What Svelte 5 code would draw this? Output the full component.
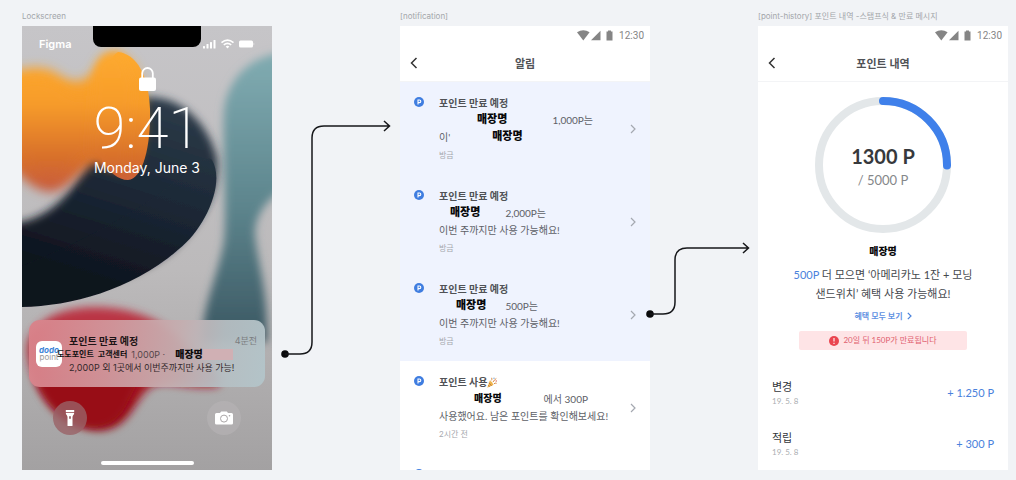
<script>
  const notices = [
    {
      title: '포인트 만료 예정', unread: true, time: '방금',
      store: 38, gap: 45, tail: '1,000P는', second: "이'", secondStore: 42
    },
    {
      title: '포인트 만료 예정', unread: true, time: '방금',
      store: 11, gap: 25, tail: '2,000P는', second: '이번 주까지만 사용 가능해요!'
    },
    {
      title: '포인트 만료 예정', unread: true, time: '방금',
      store: 17, gap: 19, tail: '500P는', second: '이번 주까지만 사용 가능해요!'
    },
    {
      title: '포인트 사용', party: true, unread: false, time: '2시간 전',
      store: 35, gap: 42, tail: '에서 300P', second: '사용했어요. 남은 포인트를 확인해보세요!', small: true
    },
    { title: '', unread: false, time: '', store: 0, gap: 0, tail: '', second: '' }
  ];

  const history = [
    { kind: '변경', date: '19. 5. 8', amount: '+ 1.250 P' },
    { kind: '적립', date: '19. 5. 8', amount: '+ 300 P' }
  ];
</script>

{#snippet appHeader(title)}
  <div class="status">
    <svg width="38" height="11" viewBox="0 0 38 11" fill="#858585" aria-hidden="true">
      <path d="M0 2.2Q6.300-1.800 12.600 2.200L6.300 10.500Z" />
      <path d="M23.500 .8V10.300H14Z" />
      <path d="M31 .4h3v1h1.500v9H29.500v-9H31Z" />
    </svg>
    <span>12:30</span>
  </div>
  <header class="appbar">
    <button class="back" aria-label="뒤로">
      <svg width="8" height="12" viewBox="0 0 8 12" aria-hidden="true">
        <path d="M6.500 1 1.500 6l5 5" fill="none" stroke="#333" stroke-width="1.500" />
      </svg>
    </button>
    <h3>{title}</h3>
  </header>
{/snippet}

<main>
  <section class="frame">
    <h2>Lockscreen</h2>
    <div class="screen lock">
      <svg class="wallpaper" viewBox="0 0 250 444" preserveAspectRatio="xMidYMid slice" aria-hidden="true">
        <defs>
          <linearGradient id="wall" x1="0" y1="0" x2="0" y2="1">
            <stop offset="0" stop-color="#c6c5c8" />
            <stop offset=".55" stop-color="#bcbabb" />
            <stop offset="1" stop-color="#a3a1a2" />
          </linearGradient>
          <linearGradient id="orange" gradientUnits="userSpaceOnUse" x1="0" y1="30" x2="0" y2="165">
            <stop offset="0" stop-color="#fda92f" />
            <stop offset=".35" stop-color="#f79c2a" />
            <stop offset=".75" stop-color="#d8702a" />
            <stop offset="1" stop-color="#c65a40" />
          </linearGradient>
          <linearGradient id="navy" gradientUnits="userSpaceOnUse" x1="140" y1="70" x2="80" y2="260">
            <stop offset="0" stop-color="#2c3b49" />
            <stop offset=".5" stop-color="#1c2836" />
            <stop offset="1" stop-color="#0e131d" />
          </linearGradient>
          <linearGradient id="teal" gradientUnits="userSpaceOnUse" x1="0" y1="40" x2="0" y2="320">
            <stop offset="0" stop-color="#7ea9af" />
            <stop offset=".5" stop-color="#5d858d" />
            <stop offset="1" stop-color="#3a5661" />
          </linearGradient>
          <linearGradient id="red" gradientUnits="userSpaceOnUse" x1="0" y1="280" x2="0" y2="405">
            <stop offset="0" stop-color="#bd3b4a" />
            <stop offset=".5" stop-color="#ad1c2a" />
            <stop offset="1" stop-color="#900813" />
          </linearGradient>
          <filter id="soft" x="-30%" y="-30%" width="160%" height="160%"><feGaussianBlur stdDeviation="5.500" /></filter>
          <filter id="edge" x="-30%" y="-30%" width="160%" height="160%"><feGaussianBlur stdDeviation="4" /></filter>
          <filter id="fine" x="-10%" y="-10%" width="120%" height="120%"><feGaussianBlur stdDeviation=".7" /></filter>
        </defs>
        <rect width="250" height="444" fill="url(#wall)" />
        <path d="M202 84C206 54 226 28 268 26V158C246 172 233 188 233 208C236 240 246 262 245 316H180C180 280 196 250 202 215C205 180 200 120 202 84Z" fill="url(#teal)" filter="url(#edge)" />
        <path d="M108 74C150 62 184 90 195 132C198 165 180 196 150 224C110 256 50 268-20 270V199C22 196 46 176 68 130Z" fill="url(#navy)" filter="url(#edge)" />
        <path d="M190 134C204 158 182 204 157 223C110 264 50 280 0 281V240C50 220 110 190 150 158C170 142 184 128 190 134Z" fill="url(#navy)" filter="url(#fine)" />
        <path d="M-20 52C-2 40 22 38 36 48C50 58 62 58 72 44C78 32 82 27 92 27C112 28 122 50 122 95C120 130 112 145 98 145C88 144 82 132 72 138C54 148 44 166 28 166C8 164-6 146-20 130Z" fill="url(#orange)" filter="url(#soft)" />
        <path d="M-10 60C10 50 30 54 44 66C60 76 72 68 82 56L106 140C90 136 74 122 60 130C46 140 40 154 28 154C14 152 2 130-10 112Z" fill="url(#orange)" filter="url(#edge)" />
        <path d="M96 26C115 28 127 50 128 83C129 120 121 153 106 154C96 154 88 146 80 136L84 60C84 44 88 30 96 26Z" fill="url(#orange)" filter="url(#fine)" />
        <path d="M72 50C76 32 84 26 97 27L112 60L104 140L84 142L66 128Z" fill="url(#orange)" filter="url(#edge)" />
        <path d="M6 330C0 302 32 280 75 281C110 282 140 292 165 320C180 338 206 345 196 360C165 364 145 352 130 360C112 372 108 405 76 404C42 402 10 365 6 330Z" fill="url(#red)" filter="url(#edge)" />
        <path d="M14 352C22 380 46 402 74 401C100 398 104 380 118 352Z" fill="#980a15" filter="url(#edge)" />
      </svg>

      <div class="notch"></div>
      <div class="phone-status">
        <span>Figma</span>
        <svg width="52" height="10" viewBox="0 0 52 10" fill="#fff" aria-hidden="true">
          <rect x="0" y="7" width="2" height="2.500" rx=".5" />
          <rect x="3.500" y="5" width="2" height="4.500" rx=".5" />
          <rect x="7" y="3" width="2" height="6.500" rx=".5" />
          <rect x="10.500" y="1" width="2" height="8.500" rx=".5" />
          <g fill="none" stroke="#fff" stroke-width="1.600">
            <path d="M18.500 3.700Q24.500-1.300 30.500 3.700" />
            <path d="M20.800 5.900Q24.500 2.900 28.200 5.900" />
          </g>
          <path d="M22.700 7.400Q24.500 6.200 26.300 7.400L24.500 9.500Z" />
          <rect x="36" y="1.500" width="14" height="7" rx="1.500" />
          <path d="M50.700 3.500q1.200 1.500 0 3Z" />
        </svg>
      </div>
      <svg class="padlock" width="17" height="24" viewBox="0 0 17 24" aria-hidden="true">
        <path d="M3.200 11V6.300a5.300 5.300 0 0 1 10.600 0V11" fill="none" stroke="#fff" stroke-width="1.800" />
        <rect y="10.500" width="17" height="13.500" rx="2" fill="#fff" />
      </svg>
      <p class="clock">9:41</p>
      <p class="date">Monday, June 3</p>

      <article class="push">
        <div class="applogo"><b>dodo</b><span>point</span></div>
        <div class="push-body">
          <div class="push-head">
            <h3>포인트 만료 예정</h3>
            <time>4분전</time>
          </div>
          <p class="sender">
            <b>도도포인트</b><b>고객센터</b><span>1,000P ·</span><strong>매장명</strong>
          </p>
          <p>2,000P 외 1곳에서 이번주까지만 사용 가능!</p>
        </div>
      </article>

      <div class="shortcuts">
        <button class="torch" aria-label="손전등">
          <svg width="10" height="18" viewBox="0 0 10 18" fill="#fff" aria-hidden="true">
            <path d="M.8 1h8.400v2.200H.8Z" />
            <path d="M.8 4h8.400c0 2-1.700 2.300-1.700 4v8.500q0 .5-.5.500H3q-.5 0-.5-.5V8C2.500 6.300.8 6 .8 4Z" />
            <rect x="4.300" y="7" width="1.400" height="3" rx=".7" fill="#7e3d43" />
          </svg>
        </button>
        <button aria-label="카메라">
          <svg width="18" height="14" viewBox="0 0 18 14" aria-hidden="true">
            <path d="M1.500 2H5L6.200.4h5.600L13 2h3.500Q18 2 18 3.500v8.700q0 1.400-1.500 1.400h-15Q0 13.600 0 12.200V3.500Q0 2 1.500 2Z" fill="#fff" />
            <circle cx="9" cy="7.600" r="3.500" fill="none" stroke="#aaa6a7" stroke-width="1" />
            <circle cx="14.500" cy="4.800" r=".8" fill="#aaa6a7" />
          </svg>
        </button>
      </div>
      <div class="home"></div>
    </div>
  </section>

  <svg class="link" viewBox="0 0 128 444" aria-hidden="true">
    <circle cx="13" cy="328" r="3.800" />
    <path d="M13 328H28Q40 328 40 316V112Q40 100 52 100H117M112 95l5.500 5-5.500 5" />
  </svg>

  <section class="frame">
    <h2>[notification]</h2>
    <div class="screen">
      {@render appHeader('알림')}
      <ul class="notices">
        {#each notices as n}
          <li>
            <a href="#notice" class:unread={n.unread}>
              <svg class="coin" width="10" height="10" viewBox="0 0 10 10" aria-hidden="true">
                <circle cx="5" cy="5" r="5" fill="#3f7de0" />
                <path d="M4 7.500V3h1.500a1.300 1.300 0 0 1 0 2.600H4" fill="none" stroke="#fff" stroke-width="1.100" />
              </svg>
              {#if n.title}
                <div class="notice-body">
                  <h4>
                    {n.title}{#if n.party}<svg width="10" height="11" viewBox="0 0 10 11" aria-hidden="true">
                      <path d="M.3 10.700 2.800 3.600Q5.800 5 6.400 8Z" fill="#efb54c" />
                      <path d="M1.200 8.200 2.600 9.800M2 5.800 4.600 8.900" stroke="#b9703a" stroke-width=".8" />
                      <path d="M4 3.500Q5.500 2.500 4.700.8M6 5Q7.500 2.500 9.300 1.500M6.800 7Q8 5.500 9.600 6.300" fill="none" stroke="#d98b45" stroke-width="1" />
                      <circle cx="7" cy="1.200" r=".7" fill="#6fa3d8" /><circle cx="9.200" cy="4" r=".7" fill="#d2584f" />
                    </svg>{/if}
                  </h4>
                  <p>
                    <strong class:small={n.small} style="margin-left: {n.store}px; margin-right: {n.gap}px">매장명</strong><span>{n.tail}</span>
                  </p>
                  <p>
                    <span>{n.second}</span>{#if n.secondStore}<strong style="margin-left: {n.secondStore}px">매장명</strong>{/if}
                  </p>
                  <time>{n.time}</time>
                </div>
                <svg class="chevron" width="6" height="10" viewBox="0 0 6 10" aria-hidden="true">
                  <path d="m1 1 4 4-4 4" fill="none" stroke="#a4a8b0" stroke-width="1.200" />
                </svg>
              {/if}
            </a>
          </li>
        {/each}
      </ul>
    </div>
  </section>

  <svg class="link" viewBox="0 0 108 444" aria-hidden="true">
    <circle cx="0" cy="288" r="3.800" />
    <path d="M0 288H13Q25 288 25 276V234Q25 222 37 222H98M93 217l5.500 5-5.500 5" />
  </svg>

  <section class="frame">
    <h2>[point-history] 포인트 내역 -스탬프식 &amp; 만료 메시지</h2>
    <div class="screen">
      {@render appHeader('포인트 내역')}
      <div class="points">
        <div class="ring">
          <svg viewBox="0 0 136 136" aria-hidden="true">
            <circle cx="68" cy="68" r="64" fill="none" stroke="#e3e7e9" stroke-width="8" />
            <path d="M68 4a64 64 0 0 1 64 64.500" fill="none" stroke="#3f80ea" stroke-width="8" stroke-linecap="round" />
          </svg>
          <div class="score"><strong>1300 P</strong><span>/ 5000 P</span></div>
        </div>
        <strong class="shop">매장명</strong>
        <p class="goal"><em>500P</em> 더 모으면 ‘아메리카노 1잔 + 모닝<br />샌드위치’ 혜택 사용 가능해요!</p>
        <a class="more" href="#benefits">
          혜택 모두 보기
          <svg width="5" height="8" viewBox="0 0 5 8" aria-hidden="true">
            <path d="m.8.8 3.200 3.200L.8 7.200" fill="none" stroke="#4a82dc" stroke-width="1.200" />
          </svg>
        </a>
        <p class="warning">
          <svg width="10" height="10" viewBox="0 0 10 10" aria-hidden="true">
            <circle cx="5" cy="5" r="5" fill="#ea4550" />
            <path d="M5 2v3.600M5 6.800V8" stroke="#fff" stroke-width="1.100" />
          </svg>
          20일 뒤 150P가 만료됩니다
        </p>
        <ul class="history">
          {#each history as h}
            <li>
              <div><span class="kind">{h.kind}</span><time>{h.date}</time></div>
              <span class="amount">{h.amount}</span>
            </li>
          {/each}
        </ul>
      </div>
    </div>
  </section>
</main>

<style>
  :global(body) {
    background: #f1f3f6;
  }
  h2, h3, h4, p, ul {
    margin: 0;
    padding: 0;
    list-style: none;
  }
  a {
    color: inherit;
    text-decoration: none;
  }
  button {
    border: 0;
    padding: 0;
    background: none;
    cursor: pointer;
  }
  svg {
    display: block;
    flex: none;
  }
  main {
    box-sizing: border-box;
    height: 100vh;
    padding: 0 8px 10px 22px;
    display: grid;
    grid-template-columns: 250fr 128fr 250fr 108fr 250fr;
    font-family: Lato, "Noto Sans CJK KR", sans-serif;
    color: #45484d;
  }
  .frame {
    display: flex;
    flex-direction: column;
    min-width: 0;
    min-height: 0;
  }
  h2 {
    height: 20px;
    padding-top: 6px;
    font: 400 8px/20px Inter, "Noto Sans CJK KR", sans-serif;
    color: #a3a6aa;
    white-space: nowrap;
  }
  .screen {
    flex: 1;
    min-height: 0;
    position: relative;
    display: flex;
    flex-direction: column;
    overflow: hidden;
    background: #fff;
  }
  .link {
    position: relative;
    width: 100%;
    margin-top: 26px;
    overflow: visible;
    fill: #0a0a0c;
  }
  .link path {
    fill: none;
    stroke: #16171a;
    stroke-width: 1.5;
  }

  /* lock screen */
  .lock {
    align-items: center;
    font-family: Inter, "Noto Sans CJK KR", sans-serif;
    color: #fff;
  }
  .lock > * {
    position: relative;
  }
  .lock > .wallpaper {
    position: absolute;
    inset: 0;
    width: 100%;
    height: 100%;
  }
  .lock > .notch {
    position: absolute;
    top: 0;
    left: 50%;
    width: 108px;
    height: 21px;
    margin-left: -54px;
    border-radius: 0 0 8px 8px;
    background: #000;
  }
  .phone-status {
    box-sizing: border-box;
    width: 100%;
    height: 36px;
    padding: 0 17px;
    display: flex;
    align-items: center;
    justify-content: space-between;
    font-size: 11px;
    font-weight: 600;
  }
  .padlock {
    margin-top: 5px;
  }
  .clock {
    margin-top: 7px;
    font-family: Roboto, Inter, sans-serif;
    font-size: 58px;
    font-weight: 200;
    line-height: 60px;
  }
  .date {
    font-size: 14px;
    line-height: 20px;
  }
  .push {
    box-sizing: border-box;
    align-self: stretch;
    height: 67px;
    margin: auto 7px 0;
    padding: 14px 8px 0 7px;
    display: flex;
    gap: 7px;
    border-radius: 11px;
    background: linear-gradient(100deg, #da8088f2, #d0989df2 35%, #c4aeb0f2 62%, #b6bec2f2 80%, #b3c5caf2);
    color: #33282b;
    font-size: 9px;
    line-height: 13px;
  }
  .applogo {
    width: 26px;
    height: 26px;
    margin-top: 7px;
    display: flex;
    flex-direction: column;
    align-items: center;
    justify-content: center;
    border-radius: 6px;
    background: #fff;
    font-size: 8px;
    line-height: 7px;
    color: #999;
  }
  .applogo b {
    font-style: italic;
    color: #3b84d8;
  }
  .push-body {
    flex: 1;
    white-space: nowrap;
  }
  .push-head {
    display: flex;
    justify-content: space-between;
    line-height: 14px;
  }
  .push-head h3 {
    font-size: 10px;
    font-weight: 700;
    color: #1d1416;
  }
  .push-head time {
    color: #7b7d80;
  }
  .push-body .sender {
    margin-left: -12px;
    display: flex;
    align-items: center;
    gap: 4px;
    color: #54464a;
  }
  .sender b {
    font-size: 8px;
    color: #111;
  }
  .sender strong {
    flex: 1;
    max-width: 58px;
    margin-left: 6px;
    font-size: 10px;
    font-weight: 900;
    line-height: 11px;
    color: #0c0a0b;
    background: linear-gradient(90deg, transparent 40%, #d0b0b4 50%);
  }
  .shortcuts {
    align-self: stretch;
    margin: 14px 31px 0;
    display: flex;
    justify-content: space-between;
  }
  .shortcuts button {
    width: 34px;
    height: 34px;
    display: grid;
    place-items: center;
    border-radius: 50%;
    background: #b8b4b699;
  }
  .shortcuts .torch {
    background: #9a6266cc;
  }
  .home {
    width: 93px;
    height: 4px;
    margin: 26px 0 5px;
    border-radius: 2px;
    background: #fff;
  }

  /* shared app chrome */
  .status {
    flex: none;
    height: 19px;
    padding-right: 6px;
    display: flex;
    align-items: center;
    justify-content: flex-end;
    gap: 4px;
    font: 10px Roboto, sans-serif;
    color: #858585;
  }
  .appbar {
    flex: none;
    height: 36px;
    padding: 0 10px;
    display: grid;
    grid-template-columns: 10px 1fr 10px;
    align-items: center;
    border-bottom: 1px solid #f3f4f6;
  }
  .appbar h3 {
    font-size: 11px;
    font-weight: 700;
    text-align: center;
    color: #505256;
  }

  /* notification list */
  .notices a {
    box-sizing: border-box;
    height: 93px;
    padding: 14px 14px 0 14px;
    display: flex;
    gap: 15px;
    font-size: 10px;
  }
  .notices .unread {
    background: #eff3fe;
  }
  .coin {
    margin-top: 1px;
  }
  .notice-body {
    flex: 1;
    white-space: nowrap;
  }
  .notices h4 {
    display: flex;
    align-items: center;
    margin-bottom: 2px;
    font-size: 10px;
    font-weight: 700;
    line-height: 14px;
    color: #505256;
  }
  .notices p {
    display: flex;
    line-height: 17px;
    color: #5d6066;
  }
  .notices strong, .shop {
    font-size: 11px;
    font-weight: 900;
    line-height: 14px;
    color: #08080a;
  }
  .notices .small, .shop {
    font-size: 10px;
  }
  .notices time {
    display: block;
    font-size: 8px;
    line-height: 18px;
    color: #a4a7ad;
  }
  .chevron {
    margin-top: 28px;
  }

  /* point history */
  .points {
    padding: 15px 14px 0;
    display: flex;
    flex-direction: column;
    align-items: center;
  }
  .ring {
    width: 136px;
    display: grid;
  }
  .ring > * {
    grid-area: 1 / 1;
  }
  .score {
    padding-top: 6px;
    display: flex;
    flex-direction: column;
    align-items: center;
    justify-content: center;
    color: #85878a;
    font-size: 13px;
    line-height: 24px;
  }
  .score strong {
    font-size: 20px;
    color: #37393c;
  }
  .shop {
    margin-top: 11px;
  }
  .goal {
    margin-top: 7px;
    font-size: 11px;
    line-height: 19px;
    text-align: center;
    color: #45484d;
  }
  .goal em {
    font-style: normal;
    color: #4a82dc;
  }
  .more {
    margin-top: 7px;
    display: flex;
    align-items: center;
    gap: 4px;
    font-size: 8px;
    font-weight: 700;
    line-height: 12px;
    color: #5f91e2;
  }
  .warning {
    width: 168px;
    margin-top: 9px;
    display: flex;
    align-items: center;
    justify-content: center;
    gap: 4px;
    border-radius: 2px;
    background: #fee4e6;
    font-size: 8px;
    line-height: 19px;
    color: #e0606f;
  }
  .history {
    align-self: stretch;
    margin-top: 29px;
  }
  .history li {
    height: 51px;
    display: flex;
    justify-content: space-between;
    line-height: 16px;
  }
  .kind, .history time {
    display: block;
  }
  .kind {
    font-size: 11px;
    color: #33363a;
  }
  .history time {
    font-size: 8px;
    line-height: 12px;
    color: #aaadb0;
  }
  .amount {
    padding-top: 6px;
    font-size: 11px;
    color: #4a82dc;
  }
</style>
